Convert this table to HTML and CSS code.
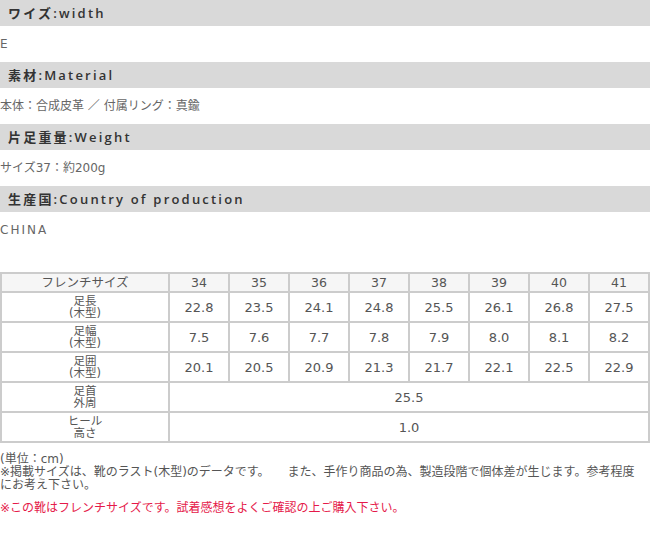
FILE: index.html
```html
<!DOCTYPE html>
<html lang="ja">
<head>
<meta charset="utf-8">
<title>Spec</title>
<link rel="stylesheet" href="styles.css">
</head>
<body>
<div class="spec">
  <h3 class="bar">ワイズ:width</h3>
  <p class="val">E</p>
  <h3 class="bar">素材:Material</h3>
  <p class="val">本体：合成皮革 ／ 付属リング：真鍮</p>
  <h3 class="bar">片足重量:Weight</h3>
  <p class="val">サイズ37：約200g</p>
  <h3 class="bar">生産国:Country of production</h3>
  <p class="val wide">CHINA</p>
</div>

<table class="size">
  <colgroup>
    <col class="c-label">
    <col><col><col><col><col><col><col><col>
  </colgroup>
  <tr class="head">
    <td>フレンチサイズ</td><td>34</td><td>35</td><td>36</td><td>37</td><td>38</td><td>39</td><td>40</td><td>41</td>
  </tr>
  <tr>
    <td class="lbl">足長<br>(木型)</td><td>22.8</td><td>23.5</td><td>24.1</td><td>24.8</td><td>25.5</td><td>26.1</td><td>26.8</td><td>27.5</td>
  </tr>
  <tr>
    <td class="lbl">足幅<br>(木型)</td><td>7.5</td><td>7.6</td><td>7.7</td><td>7.8</td><td>7.9</td><td>8.0</td><td>8.1</td><td>8.2</td>
  </tr>
  <tr>
    <td class="lbl">足囲<br>(木型)</td><td>20.1</td><td>20.5</td><td>20.9</td><td>21.3</td><td>21.7</td><td>22.1</td><td>22.5</td><td>22.9</td>
  </tr>
  <tr>
    <td class="lbl">足首<br>外周</td><td colspan="8">25.5</td>
  </tr>
  <tr>
    <td class="lbl">ヒール<br>高さ</td><td colspan="8">1.0</td>
  </tr>
</table>

<div class="notes">
  <p>(単位：cm)<br>※掲載サイズは、靴のラスト(木型)のデータです。　　また、手作り商品の為、製造段階で個体差が生じます。参考程度<br>にお考え下さい。</p>
  <p class="warn">※この靴はフレンチサイズです。試着感想をよくご確認の上ご購入下さい。</p>
</div>
</body>
</html>
```

FILE: styles.css
```css
html, body {
  margin: 0;
  padding: 0;
  background: #fff;
}

body {
  font-family: "DejaVu Sans", "Noto Sans CJK JP", sans-serif;
  font-size: 12px;
  color: #555;
  width: 650px;
}

.bar {
  margin: 0;
  height: 26px;
  line-height: 26px;
  background: #d9d9d9;
  color: #333;
  font-family: "Open Sans", "Noto Sans CJK JP", sans-serif;
  font-size: 13px;
  font-weight: 600;
  letter-spacing: 2.2px;
  padding-left: 8px;
}

.val {
  margin: 0;
  height: 36px;
  line-height: 36px;
  color: #666;
  font-size: 12px;
}

.val.wide {
  letter-spacing: 2px;
}

.size {
  margin-top: 24px;
  width: 650px;
  border-collapse: collapse;
  table-layout: fixed;
  border: 2px solid #ccc;
}

.c-label {
  width: 168px;
}

.size td {
  border: 2px solid #ccc;
  text-align: center;
  padding: 0;
  height: 28px;
  font-size: 13px;
  color: #555;
}

.size .head td {
  height: 17px;
  line-height: 17px;
  background: #f6f6f6;
  font-size: 12.5px;
}

.size td.lbl {
  font-size: 11.5px;
  line-height: 12.5px;
}

.notes {
  margin-top: 10px;
}

.notes p {
  margin: 0;
  font-size: 12px;
  line-height: 13px;
  color: #555;
}

.notes .warn {
  margin-top: 10px;
  color: #e5194a;
}
```
